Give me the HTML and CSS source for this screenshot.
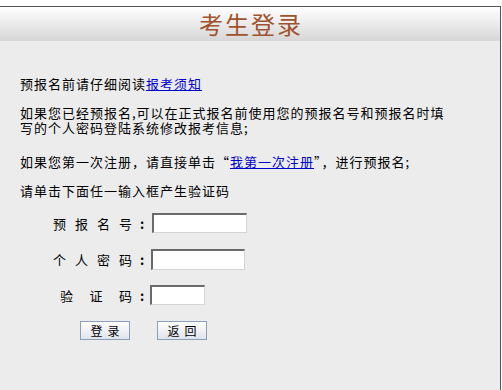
FILE: index.html
```html
<!DOCTYPE html>
<html lang="zh-CN">
<head>
<meta charset="utf-8">
<title>考生登录</title>
<link rel="stylesheet" href="styles.css">
</head>
<body>
<div class="box">
  <div class="head"><h1 class="title">考生登录</h1></div>
  <div class="content">
    <p class="para">预报名前请仔细阅读<a href="#">报考须知</a></p>
    <p class="para">如果您已经预报名,可以在正式报名前使用您的预报名号和预报名时填写的个人密码登陆系统修改报考信息;</p>
    <p class="para para-wide">如果您第一次注册，请直接单击“<a href="#">我第一次注册</a>”，进行预报名;</p>
    <p class="para">请单击下面任一输入框产生验证码</p>
    <form class="form">
      <div class="row">
        <span class="lbl"><span>预</span><span>报</span><span>名</span><span>号</span></span><span class="colon">:</span><input class="in in-long" type="text">
      </div>
      <div class="row">
        <span class="lbl"><span>个</span><span>人</span><span>密</span><span>码</span></span><span class="colon">:</span><input class="in in-long2" type="text">
      </div>
      <div class="row">
        <span class="lbl lbl-short"><span>验</span><span>证</span><span>码</span></span><span class="colon">:</span><input class="in in-short" type="text">
      </div>
      <div class="btns">
        <button class="btn" type="button">登录</button>
        <button class="btn" type="button">返回</button>
      </div>
    </form>
  </div>
</div>
</body>
</html>
```

FILE: styles.css
```css
html, body {
  margin: 0;
  padding: 0;
  background: #ffffff;
}
body {
  font-family: "Noto Sans CJK SC", "Noto Sans", sans-serif;
  font-size: 13px;
  color: #000;
}
.box {
  margin-top: 6px;
  width: 500px;
  height: 400px;
  border-top: 1px solid #50555a;
  border-right: 1px solid #50555a;
  background: #ececec;
}
.head {
  height: 34px;
  background: linear-gradient(to bottom, #ffffff 0%, #d6d6d6 100%);
  display: flex;
  align-items: center;
  justify-content: center;
}
.title {
  margin: 0;
  padding-left: 2px;
  font-size: 24px;
  font-weight: normal;
  letter-spacing: 2px;
  line-height: 30px;
  color: #a0522d;
}
.content {
  padding: 35px 0 0 20px;
}
.para {
  margin: 0 0 14px 0;
  line-height: 15px;
  letter-spacing: 1px;
  max-width: 432px;
}
.para-wide {
  margin-top: 19px;
}
.para a {
  color: #0000cc;
  text-decoration: underline;
}
.form {
  margin: 15px 0 0 0;
}
.row {
  display: flex;
  align-items: center;
  height: 20px;
  margin-bottom: 16px;
}
.lbl {
  display: flex;
  justify-content: space-between;
  width: 79px;
  margin-left: 33px;
  font-size: 13px;
}
.lbl-short {
  width: 72px;
  margin-left: 40px;
}
.colon {
  margin-left: 8px;
  font-weight: bold;
  width: 4px;
}
.in {
  box-sizing: border-box;
  height: 20px;
  margin: 0 0 0 8px;
  padding: 0 2px;
  background: #fff;
  border-style: solid;
  border-width: 2px 1px 1px 2px;
  border-color: #6a6a6a #d4d4d4 #d4d4d4 #6a6a6a;
  outline: none;
}
.in-long { width: 95px; }
.in-long2 { width: 94px; height: 21px; margin-left: 7px; }
.in-short { width: 55px; margin-left: 6px; }
.btns {
  display: flex;
  gap: 27px;
  margin-left: 60px;
}
.btn {
  box-sizing: border-box;
  width: 50px;
  height: 19px;
  padding: 0 0 0 5px;
  font-family: "Noto Sans CJK SC", sans-serif;
  font-size: 12px;
  letter-spacing: 5px;
  line-height: 15px;
  color: #000;
  background: linear-gradient(to bottom, #ffffff 0%, #dfe4ec 100%);
  border: 1px solid #8aa0ba;
  border-radius: 0;
}
```
